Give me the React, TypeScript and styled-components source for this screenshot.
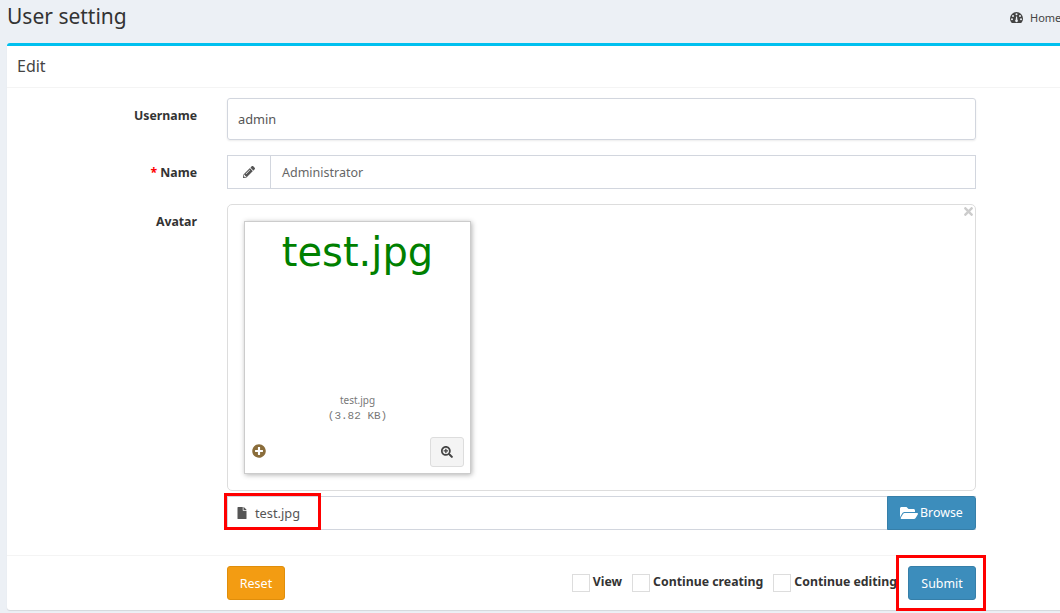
import React from 'react';
import styled, { createGlobalStyle } from 'styled-components';
import {
	FaFile,
	FaFolderOpen,
	FaPencilAlt,
	FaPlusCircle,
	FaSearchPlus,
	FaTimes,
} from 'react-icons/fa';

const GlobalStyle = createGlobalStyle`
	html, body {
		margin: 0;
		height: 100%;
		overflow: hidden;
		background: #ecf0f5;
	}
	body {
		font: 400 12.4px/1.43 'Noto Sans', 'Open Sans', sans-serif;
		color: #333;
	}
	* {
		box-sizing: border-box;
	}
`;

const GaugeIcon = () => (
	<svg width="13" height="11" viewBox="0 0 13 11" fill="currentColor">
		<path
			fillRule="evenodd"
			d="M6.5 0A6.5 6.5 0 0 0 0 6.5C0 8 .5 9.400 1.300 10.500c.2.300.5.500.9.500h8.600c.4 0 .7-.2.9-.5C12.500 9.400 13 8 13 6.500A6.500 6.500 0 0 0 6.500 0ZM6.500 1.300a1 1 0 1 1 0 2 1 1 0 0 1 0-2ZM3 3a1 1 0 1 1 0 2 1 1 0 0 1 0-2ZM10 3a1 1 0 1 1 0 2 1 1 0 0 1 0-2ZM2 6.300a1 1 0 1 1 0 2 1 1 0 0 1 0-2ZM11 6.300a1 1 0 1 1 0 2 1 1 0 0 1 0-2ZM6.100 4.500h.9l.4 3.300a1.300 1.300 0 1 1-1.700 0Z"
		/>
	</svg>
);

const App = () => {
	return (
		<Page>
			<GlobalStyle />
			<PageHeader>
				<PageTitle>User setting</PageTitle>
				<Breadcrumb>
					<GaugeIcon />
					<span>Home</span>
				</Breadcrumb>
			</PageHeader>
			<Box>
				<BoxHeader>Edit</BoxHeader>
				<BoxBody>
					<FormRow>
						<FieldLabel>Username</FieldLabel>
						<PlainInput>admin</PlainInput>
					</FormRow>
					<FormRow>
						<FieldLabel>
							<Required>*</Required> Name
						</FieldLabel>
						<InputGroup>
							<InputAddon>
								<FaPencilAlt size={12} />
							</InputAddon>
							<GroupValue>Administrator</GroupValue>
						</InputGroup>
					</FormRow>
					<FormRow>
						<FieldLabel>Avatar</FieldLabel>
						<div>
							<PreviewFrame>
								<CloseMark>
									<FaTimes size={13} />
								</CloseMark>
								<Thumbnail>
									<PreviewName>test.jpg</PreviewName>
									<ThumbCaption>
										<div>test.jpg</div>
										<FileSize>(3.82 KB)</FileSize>
									</ThumbCaption>
									<ThumbFooter>
										<AddIcon size={14} />
										<ZoomButton>
											<FaSearchPlus size={12} />
										</ZoomButton>
									</ThumbFooter>
								</Thumbnail>
							</PreviewFrame>
							<FileCaption>
								<CaptionName>
									<FaFile size={12} />
									<span>test.jpg</span>
									<FileHighlight />
								</CaptionName>
								<BrowseButton>
									<FaFolderOpen size={18} />
									Browse
								</BrowseButton>
							</FileCaption>
						</div>
					</FormRow>
				</BoxBody>
				<BoxFooter>
					<ResetButton>Reset</ResetButton>
					<FooterActions>
						<CheckLabel>
							<CheckSquare />
							View
						</CheckLabel>
						<CheckLabel>
							<CheckSquare />
							Continue creating
						</CheckLabel>
						<CheckLabel>
							<CheckSquare />
							Continue editing
						</CheckLabel>
						<SubmitButton>
							Submit
							<SubmitHighlight />
						</SubmitButton>
					</FooterActions>
				</BoxFooter>
			</Box>
		</Page>
	);
};

const Page = styled.div`
	width: 1060px;
	height: 613px;
	overflow: hidden;
`;
const PageHeader = styled.div`
	display: flex;
	justify-content: space-between;
	height: 43px;
	padding-left: 7px;
`;
const PageTitle = styled.h1`
	margin: 0;
	font-size: 21px;
	font-weight: 400;
	line-height: 33px;
`;
const Breadcrumb = styled.div`
	display: flex;
	align-items: center;
	gap: 7px;
	width: 60px;
	height: 35px;
	margin-right: -10px;
	flex: none;
	font-size: 11px;
	color: #444;
	white-space: nowrap;
`;
const Box = styled.div`
	width: 1060px;
	margin-left: 7px;
	height: 567px;
	background: #fff;
	border-top: 3px solid #00c0ef;
	border-radius: 3px 0 0 3px;
	box-shadow: 0 1px 1px rgba(0, 0, 0, 0.1);
`;
const BoxHeader = styled.div`
	height: 42px;
	padding-left: 10px;
	font-size: 16px;
	line-height: 40px;
	color: #444;
	border-bottom: 1px solid #f4f4f4;
`;
const BoxBody = styled.div`
	height: 468px;
	padding-top: 10px;
`;
const FormRow = styled.div`
	display: grid;
	grid-template-columns: 190px 749px;
	column-gap: 30px;
	margin-bottom: 15px;
`;
const FieldLabel = styled.label`
	font-size: 12.3px;
	font-weight: 700;
	line-height: 16px;
	text-align: right;
	padding-top: 10px;
	color: #333;
`;
const Required = styled.span`
	color: #f00;
`;
const PlainInput = styled.div`
	height: 42px;
	padding-left: 10px;
	border: 1px solid #d2d6de;
	border-radius: 3px;
	box-shadow: 0 1px 2px rgba(0, 0, 0, 0.08);
	font-size: 12.8px;
	line-height: 40px;
	color: #555;
`;
const InputGroup = styled.div`
	display: flex;
	height: 34px;
	border: 1px solid #d2d6de;
	color: #555;
`;
const InputAddon = styled.div`
	display: flex;
	align-items: center;
	justify-content: center;
	width: 43px;
	border-right: 1px solid #d2d6de;
`;
const GroupValue = styled.div`
	padding-left: 11px;
	font-size: 12.5px;
	line-height: 33px;
	color: #666;
`;
const PreviewFrame = styled.div`
	position: relative;
	height: 287px;
	padding: 16px;
	border: 1px solid #ddd;
	border-radius: 5px;
`;
const CloseMark = styled.div`
	position: absolute;
	top: 0;
	right: 0;
	color: #ccc;
`;
const Thumbnail = styled.div`
	display: flex;
	flex-direction: column;
	width: 227px;
	height: 253px;
	border: 1px solid #ccc;
	box-shadow: 1px 1px 5px rgba(0, 0, 0, 0.3);
`;
const PreviewName = styled.div`
	height: 171px;
	text-align: center;
	font: 400 40px/60px 'DejaVu Sans', Verdana, sans-serif;
	color: #008000;
`;
const ThumbCaption = styled.div`
	height: 44px;
	text-align: center;
	font-size: 10px;
	line-height: 15px;
	color: #777;
`;
const FileSize = styled.div`
	margin-top: 1px;
	font: 400 11px/15px 'Liberation Mono', monospace;
`;
const ThumbFooter = styled.div`
	display: flex;
	align-items: center;
	justify-content: space-between;
	padding: 0 6px 0 7px;
	height: 30px;
`;
const AddIcon = styled(FaPlusCircle)`
	margin-bottom: 2px;
	color: #8a6d3b;
`;
const ZoomButton = styled.div`
	display: flex;
	align-items: center;
	justify-content: center;
	width: 34px;
	height: 30px;
	background: #f4f4f4;
	border: 1px solid #ddd;
	border-radius: 3px;
	color: #444;
`;
const FileCaption = styled.div`
	display: flex;
	justify-content: space-between;
	height: 34px;
	margin-top: 5px;
	border: 1px solid #d2d6de;
	border-right: 0;
`;
const CaptionName = styled.div`
	position: relative;
	display: flex;
	align-items: center;
	gap: 7px;
	padding-left: 8px;
	font-size: 12.8px;
	color: #555;
`;
const FileHighlight = styled.div`
	position: absolute;
	top: -4px;
	left: -4px;
	width: 97px;
	height: 37px;
	border: 3px solid #f00;
`;
const BrowseButton = styled.div`
	display: flex;
	align-items: center;
	gap: 2px;
	width: 89px;
	margin: -1px 0;
	padding-left: 12px;
	font-size: 12.4px;
	color: #fff;
	background: #3c8dbc;
	border: 1px solid #367fa9;
	border-radius: 0 3px 3px 0;
`;
const BoxFooter = styled.div`
	display: flex;
	align-items: flex-start;
	justify-content: space-between;
	width: 969px;
	height: 54px;
	padding: 10px 0 0 220px;
	box-shadow: 0 -1px 0 #f4f4f4;
`;
const ResetButton = styled.div`
	width: 58px;
	height: 34px;
	text-align: center;
	font-size: 12.5px;
	line-height: 33px;
	color: #fff;
	background: #f39c12;
	border: 1px solid #e08e0b;
	border-radius: 3px;
`;
const FooterActions = styled.div`
	display: flex;
	align-items: flex-start;
`;
const CheckLabel = styled.div`
	display: flex;
	align-items: flex-start;
	height: 34px;
	margin-left: 10px;
	padding-top: 8px;
	font-size: 12.3px;
	font-weight: 700;
	line-height: 15px;
	gap: 3px;
`;
const CheckSquare = styled.span`
	width: 18px;
	height: 18px;
	flex: none;
	border: 1px solid #ddd;
`;
const SubmitButton = styled.div`
	position: relative;
	width: 68px;
	height: 34px;
	margin-left: 11px;
	text-align: center;
	font-size: 12.4px;
	line-height: 33px;
	color: #fff;
	background: #3c8dbc;
	border: 1px solid #367fa9;
	border-radius: 3px;
`;
const SubmitHighlight = styled.div`
	position: absolute;
	top: -12px;
	left: -13px;
	width: 90px;
	height: 56px;
	border: 3px solid #f00;
`;

export default App;
